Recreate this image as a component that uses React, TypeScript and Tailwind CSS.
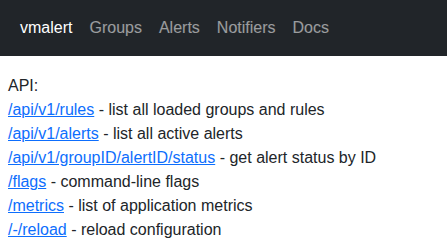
import React from 'react';

const links: [string, string][] = [
  ['/api/v1/rules', 'list all loaded groups and rules'],
  ['/api/v1/alerts', 'list all active alerts'],
  ['/api/v1/groupID/alertID/status', 'get alert status by ID'],
  ['/flags', 'command-line flags'],
  ['/metrics', 'list of application metrics'],
  ['/-/reload', 'reload configuration'],
];

export default function App() {
  return (
    <div className="min-h-screen bg-white font-['Liberation_Sans',sans-serif] text-[16px] text-[#212529]">
      <header className="h-[56px] bg-[#212529] flex items-center px-[20px]">
        <nav className="flex items-center gap-[17px]">
          <a href="#" className="text-white">vmalert</a>
          <a href="#" className="text-white/55">Groups</a>
          <a href="#" className="text-white/55">Alerts</a>
          <a href="#" className="text-white/55">Notifiers</a>
          <a href="#" className="text-white/55">Docs</a>
        </nav>
      </header>
      <main className="px-[8px] pt-[18px] leading-[24px]">
        <div>API:</div>
        {links.map(([href, desc]) => (
          <div key={href}>
            <a href="#" className="text-[#0d6efd] underline">{href}</a> - {desc}
          </div>
        ))}
      </main>
    </div>
  );
}
